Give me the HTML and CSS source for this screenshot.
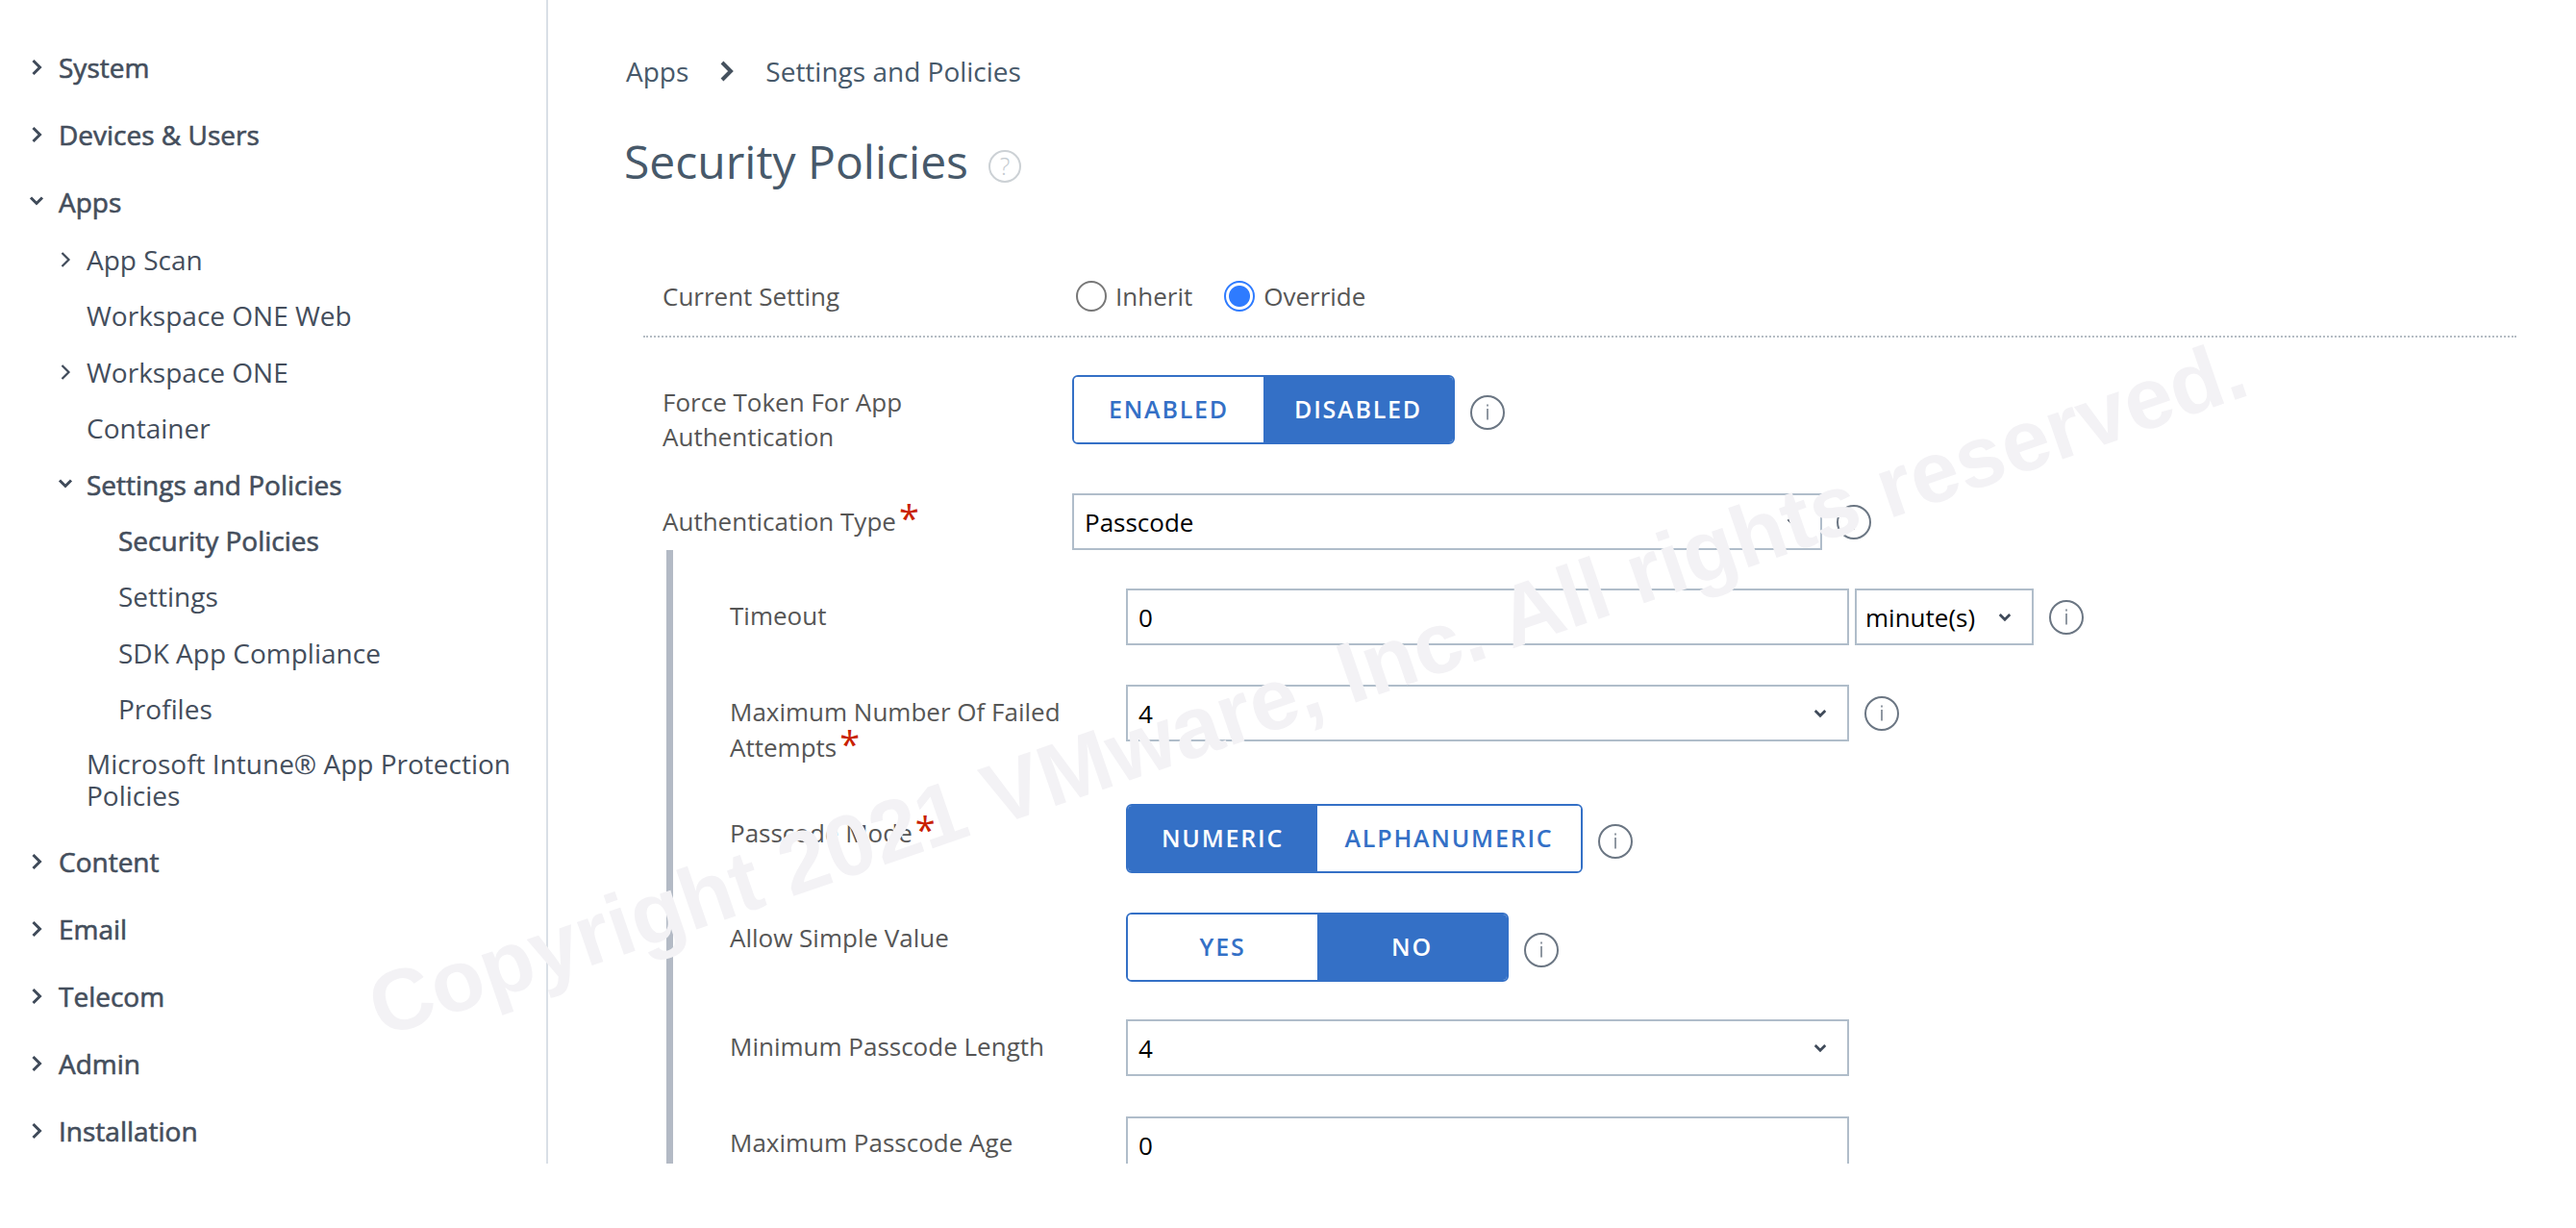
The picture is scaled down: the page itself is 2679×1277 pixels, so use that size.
FILE: index.html
```html
<!DOCTYPE html>
<html>

<head>
  <meta charset="UTF-8">
  <title>Security Policies</title>
  <link rel="stylesheet" href="styles.css">
</head>

<body>
  <svg class="defs" width="0" height="0">
    <symbol id="chev-r" viewBox="0 0 12 18"><path d="M2.500 2l7 7-7 7" fill="none" stroke="currentColor"/></symbol>
    <symbol id="chev-d" viewBox="0 0 16 12"><path d="M2 2.500l6 6 6-6" fill="none" stroke="currentColor"/></symbol>
    <symbol id="info" viewBox="0 0 36 36"><circle cx="18" cy="18" r="17" fill="#fff" stroke="#6b7683" stroke-width="2"/><path d="M18 14v11.500M18 9.500v2" stroke="#6b7683" stroke-width="1.500"/></symbol>
  </svg>

  <div id="page">
    <nav id="sidebar">
      <div class="nav-item top"><svg class="chev"><use href="#chev-r"/></svg>System</div>
      <div class="nav-item top"><svg class="chev"><use href="#chev-r"/></svg>Devices &amp; Users</div>
      <div class="nav-item top"><svg class="chev down"><use href="#chev-d"/></svg>Apps</div>
      <div class="nav-item sub"><svg class="chev"><use href="#chev-r"/></svg>App Scan</div>
      <div class="nav-item sub">Workspace ONE Web</div>
      <div class="nav-item sub"><svg class="chev"><use href="#chev-r"/></svg>Workspace ONE</div>
      <div class="nav-item sub">Container</div>
      <div class="nav-item sub strong"><svg class="chev down"><use href="#chev-d"/></svg>Settings and Policies</div>
      <div class="nav-item leaf strong">Security Policies</div>
      <div class="nav-item leaf">Settings</div>
      <div class="nav-item leaf">SDK App Compliance</div>
      <div class="nav-item leaf">Profiles</div>
      <div class="nav-item sub wrap">Microsoft Intune® App Protection Policies</div>
      <div class="nav-item top"><svg class="chev"><use href="#chev-r"/></svg>Content</div>
      <div class="nav-item top"><svg class="chev"><use href="#chev-r"/></svg>Email</div>
      <div class="nav-item top"><svg class="chev"><use href="#chev-r"/></svg>Telecom</div>
      <div class="nav-item top"><svg class="chev"><use href="#chev-r"/></svg>Admin</div>
      <div class="nav-item top"><svg class="chev"><use href="#chev-r"/></svg>Installation</div>
    </nav>

    <main id="content">
      <div class="crumbs">
        <span>Apps</span>
        <svg class="crumb-sep" viewBox="0 0 16 22"><path d="M3 2l9 9-9 9" fill="none" stroke="currentColor" stroke-width="4"/></svg>
        <span>Settings and Policies</span>
      </div>
      <h1>Security Policies <svg class="help" viewBox="0 0 34 34"><circle cx="17" cy="17" r="16" fill="none" stroke="#ccd1d5" stroke-width="2"/><text x="17" y="26" text-anchor="middle" class="help-mark">?</text></svg></h1>

      <form id="form">
        <div class="row current">
          <div class="lbl">Current Setting</div>
          <div class="ctl radios">
            <span class="radio"></span><span class="radio-text">Inherit</span>
            <span class="radio on"></span><span class="radio-text">Override</span>
          </div>
        </div>

        <div class="row force">
          <div class="lbl">Force Token For App Authentication</div>
          <div class="ctl">
            <div class="toggle"><span class="opt w-enabled">ENABLED</span><span class="opt sel w-disabled">DISABLED</span></div>
            <svg class="info down"><use href="#info"/></svg>
          </div>
        </div>

        <div class="row auth">
          <div class="lbl">Authentication Type<span class="req">*</span></div>
          <div class="ctl">
            <div class="field select w-auth">Passcode<svg class="arrow"><use href="#chev-d"/></svg></div>
            <svg class="info tight"><use href="#info"/></svg>
          </div>
        </div>

        <div class="nested">
          <div class="row r-timeout">
            <div class="lbl">Timeout</div>
            <div class="ctl">
              <div class="field w-num">0</div>
              <div class="field select w-unit">minute(s)<svg class="arrow"><use href="#chev-d"/></svg></div>
              <svg class="info"><use href="#info"/></svg>
            </div>
          </div>
          <div class="row r-failed">
            <div class="lbl">Maximum Number Of Failed Attempts<span class="req">*</span></div>
            <div class="ctl">
              <div class="field select w-full">4<svg class="arrow"><use href="#chev-d"/></svg></div>
              <svg class="info"><use href="#info"/></svg>
            </div>
          </div>
          <div class="row r-mode">
            <div class="lbl">Passcode Mode<span class="req">*</span></div>
            <div class="ctl">
              <div class="toggle"><span class="opt sel w-numeric">NUMERIC</span><span class="opt w-alpha">ALPHANUMERIC</span></div>
              <svg class="info down"><use href="#info"/></svg>
            </div>
          </div>
          <div class="row r-simple">
            <div class="lbl">Allow Simple Value</div>
            <div class="ctl">
              <div class="toggle"><span class="opt w-numeric">YES</span><span class="opt sel w-no">NO</span></div>
              <svg class="info down"><use href="#info"/></svg>
            </div>
          </div>
          <div class="row r-min">
            <div class="lbl">Minimum Passcode Length</div>
            <div class="ctl">
              <div class="field select w-full">4<svg class="arrow"><use href="#chev-d"/></svg></div>
            </div>
          </div>
          <div class="row r-age">
            <div class="lbl">Maximum Passcode Age</div>
            <div class="ctl">
              <div class="field w-full">0</div>
            </div>
          </div>
        </div>
      </form>
    </main>
  </div>

  <div id="watermark">Copyright 2021 VMware, Inc. All rights reserved.</div>
</body>

</html>
```

FILE: styles.css
```css
body {
  margin: 0;
  background-color: #fff;
  font-family: 'Open Sans', 'Noto Sans', sans-serif;
  color: #46505e;
  overflow: hidden;
}

.defs {
  position: absolute;
}

#page {
  display: flex;
  height: 1210px;
  overflow: hidden;
}

/* left nav */
#sidebar {
  width: 568px;
  flex: none;
  box-sizing: content-box;
  border-right: 2px solid #d9dfe6;
  padding-top: 50px;
  font-size: 28px;
  line-height: 40px;
}

.nav-item {
  position: relative;
  display: block;
  color: #444e5c;
}

.top {
  padding-left: 61px;
  margin-bottom: 30px;
  font-weight: 500;
  -webkit-text-stroke: 0.6px #444e5c;
}

.top + .sub {
  margin-top: -10px;
}

.sub {
  padding-left: 90px;
  margin-bottom: 18.400px;
}

.leaf {
  padding-left: 123px;
  margin-bottom: 18.400px;
}

.strong {
  font-weight: 500;
  -webkit-text-stroke: 0.6px #444e5c;
}

.wrap {
  line-height: 33px;
  padding-top: 2px;
  padding-right: 20px;
  margin-bottom: 32px;
}

.chev {
  position: absolute;
  left: 32px;
  top: 11px;
  width: 12px;
  height: 18px;
  color: #3f4a59;
  stroke-width: 3;
}

.sub .chev {
  left: 62px;
  stroke-width: 2.200;
}

.chev.down {
  left: 30px;
  top: 13px;
  width: 16px;
  height: 12px;
  stroke-width: 3;
}

.sub .chev.down {
  left: 60px;
}

/* main */
#content {
  flex: 1;
  padding: 0 62px 0 81px;
  min-width: 0;
}

.crumbs {
  display: flex;
  align-items: center;
  gap: 32px;
  margin-top: 54px;
  height: 40px;
  font-size: 28px;
  color: #47596a;
}

.crumb-sep {
  width: 16px;
  height: 22px;
  color: #46525f;
}

h1 {
  display: flex;
  align-items: center;
  gap: 21px;
  margin: 39px 0 0 -2px;
  height: 68px;
  font-size: 48px;
  font-weight: 400;
  color: #47596a;
}

.help {
  width: 34px;
  height: 34px;
  margin-top: 11px;
}

.help-mark {
  font-size: 25px;
  font-weight: 300;
  fill: #c4cad0;
}

#form {
  margin-top: 82px;
  margin-left: 18px;
}

.row {
  display: grid;
  grid-template-columns: 446px 1fr;
  font-size: 26px;
}

.lbl {
  padding-left: 20px;
  line-height: 36px;
  color: #565656;
}

.ctl {
  display: flex;
  align-items: center;
  min-width: 0;
}

.req {
  color: #c92100;
  font-size: 38px;
  line-height: 20px;
  margin-left: 3px;
  vertical-align: -1px;
}

.current {
  align-items: center;
  height: 50px;
  padding-bottom: 16px;
  border-bottom: 2px dotted #b5bcc4;
}

.radios {
  gap: 0;
  padding-left: 4px;
}

.radio {
  width: 32px;
  height: 32px;
  box-sizing: border-box;
  border: 2px solid #777;
  border-radius: 50%;
  background-color: #fff;
}

.radio.on {
  border-color: #2e7bff;
  background: radial-gradient(circle, #2e7bff 0, #2e7bff 10.500px, #fff 11.500px);
}

.radio-text {
  margin: 0 33px 0 9px;
  color: #565656;
}

.force {
  margin-top: 39px;
  align-items: start;
}

.force .lbl {
  padding-top: 10px;
}

.toggle {
  display: flex;
  height: 72px;
  box-sizing: border-box;
  border: 2px solid #3470c6;
  border-radius: 6px;
  overflow: hidden;
}

.opt {
  display: flex;
  align-items: center;
  justify-content: center;
  padding-bottom: 2px;
  box-sizing: border-box;
  font-size: 25px;
  font-weight: 600;
  letter-spacing: 1.800px;
  color: #3470c6;
  background-color: #fff;
}

.opt.sel {
  background-color: #3470c6;
  color: #fff;
}

.w-enabled {
  width: 197px;
}

.w-disabled {
  width: 197px;
}

.w-numeric {
  width: 197px;
}

.w-alpha {
  width: 274px;
}

.w-no {
  width: 197px;
}

.info {
  width: 36px;
  height: 36px;
  margin-left: 16px;
  flex: none;
}

.info.tight {
  margin-left: 15px;
}

.info.down {
  margin-top: 6px;
}

.field {
  position: relative;
  height: 59px;
  box-sizing: border-box;
  border: 2px solid #b0bdca;
  padding-left: 11px;
  line-height: 56px;
  font-size: 26px;
  color: #000;
  background-color: #fff;
  flex: none;
}

.arrow {
  position: absolute;
  right: 21px;
  top: 21px;
  width: 14px;
  height: 14px;
  color: #3f4a59;
  stroke-width: 3.200;
}

.auth {
  margin-top: 41px;
}

.auth .lbl {
  padding-top: 11px;
}

.w-auth {
  width: 780px;
}

.nested {
  margin-left: 24px;
  border-left: 7px solid #b3bac5;
  padding-top: 40px;
}

.nested .row {
  grid-template-columns: 471px 1fr;
}

.nested .lbl {
  padding-left: 59px;
  padding-top: 10px;
}

.nested .r-failed .lbl {
  line-height: 37px;
}

.nested .r-mode .lbl {
  padding-top: 12px;
}

.nested .r-simple .lbl {
  padding-top: 8px;
}

.nested .r-age .lbl {
  padding-top: 9px;
}

.w-num {
  width: 752px;
  margin-right: 6px;
}

.w-unit {
  width: 186px;
  padding-left: 9px;
}

.w-full {
  width: 752px;
}

.r-timeout,
.r-failed,
.r-mode,
.r-simple,
.r-min,
.r-age {
  align-items: start;
}

.r-failed {
  margin-top: 41px;
}

.r-mode {
  margin-top: 40px;
}

.r-simple {
  margin-top: 41px;
}

.r-min {
  margin-top: 39px;
}

.r-age {
  margin-top: 42px;
}

/* watermark sits over everything */
#watermark {
  position: absolute;
  left: 387px;
  top: 1000px;
  transform: rotate(-19deg);
  transform-origin: left center;
  font-family: 'Liberation Sans', Arial, sans-serif;
  font-weight: 700;
  font-size: 90px;
  line-height: 100px;
  white-space: nowrap;
  color: #f3f2f5;
  pointer-events: none;
}
```
